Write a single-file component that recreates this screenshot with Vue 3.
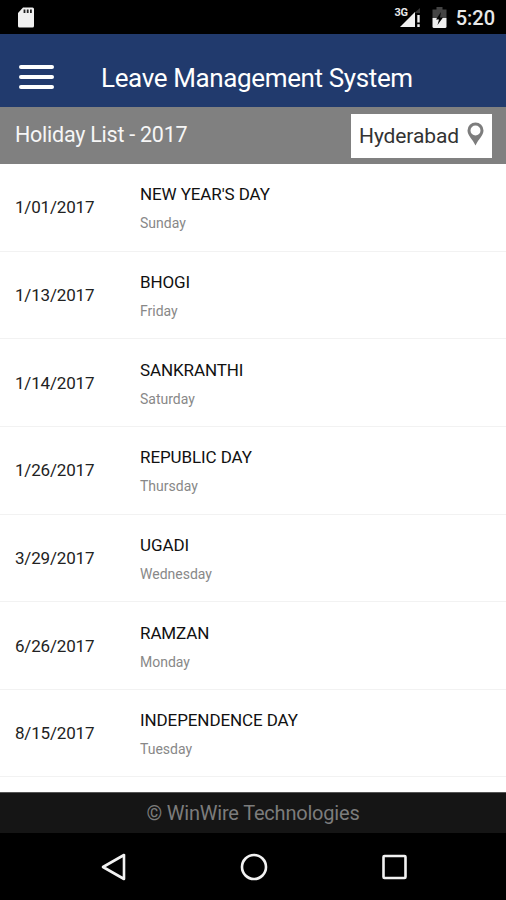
<template>
  <div class="phone">
    <div class="status">
      <svg class="sd" width="17" height="21" viewBox="0 0 17 21">
        <path d="M6 0.5H15.5Q17 0.5 17 2V19Q17 20.5 15.5 20.5H2.5Q1 20.5 1 19V6Z" fill="#f0f0f0" />
        <path d="M7.5 2.5V6M10.700 2.5V6M13.900 2.5V6" stroke="#222" stroke-width="1.800" />
      </svg>
      <div class="status-right">
        <span class="network">3G</span>
        <svg class="signal" width="22" height="20" viewBox="0 0 22 20">
          <path d="M21 1V6H16V9L12 9Z" fill="#333" />
          <path d="M16 5V20H1Z" fill="#f0f0f0" />
          <path d="M19.500 8V15.500M19.500 17.300V20" stroke="#f0f0f0" stroke-width="2.400" />
        </svg>
        <svg class="battery" width="15" height="21" viewBox="0 0 15 21">
          <path d="M4.500 0H10.500V2.500H14.500V11H0.500V2.500H4.500Z" fill="#444" />
          <path d="M0.500 11H14.500V19.500Q14.500 21 13 21H2Q0.500 21 0.500 19.500Z" fill="#f0f0f0" />
          <path d="M9 5L4 12.500H7L5.500 18L11 10.500H8Z" fill="#050505" />
        </svg>
        <span class="clock">5:20</span>
      </div>
    </div>

    <header class="header">
      <button class="menu"><i></i><i></i><i></i></button>
      <h1>Leave Management System</h1>
    </header>

    <div class="subheader">
      <h2>Holiday List - 2017</h2>
      <button class="city">
        <span>{{ city }}</span>
        <svg width="17" height="24" viewBox="0 0 17 24">
          <path d="M8.500 0.500A8 8 0 0 0 0.500 8.500C0.500 13.500 5.500 17 8.500 23.500C11.500 17 16.500 13.500 16.500 8.500A8 8 0 0 0 8.500 0.500ZM8.500 3.500A5 5 0 1 1 8.500 13.500A5 5 0 1 1 8.500 3.500Z" fill="#7d7d7d" fill-rule="evenodd" />
        </svg>
      </button>
    </div>

    <ul class="holidays">
      <li v-for="holiday in holidays" :key="holiday.date">
        <span class="date">{{ holiday.date }}</span>
        <div>
          <p class="name">{{ holiday.name }}</p>
          <p class="day">{{ holiday.day }}</p>
        </div>
      </li>
    </ul>

    <footer class="footer"><span>© WinWire Technologies</span></footer>

    <nav class="softkeys">
      <svg width="28" height="28" viewBox="0 0 28 28"><path d="M25 2V26L4 14Z" /></svg>
      <svg width="28" height="28" viewBox="0 0 28 28"><circle cx="14" cy="14" r="12" /></svg>
      <svg width="28" height="28" viewBox="0 0 28 28"><rect x="3.500" y="3" width="22" height="22" rx="1" /></svg>
    </nav>
  </div>
</template>

<script setup>
import { ref } from "vue"

const city = ref("Hyderabad")

const holidays = ref([
  { date: "1/01/2017", name: "NEW YEAR'S DAY", day: "Sunday" },
  { date: "1/13/2017", name: "BHOGI", day: "Friday" },
  { date: "1/14/2017", name: "SANKRANTHI", day: "Saturday" },
  { date: "1/26/2017", name: "REPUBLIC DAY", day: "Thursday" },
  { date: "3/29/2017", name: "UGADI", day: "Wednesday" },
  { date: "6/26/2017", name: "RAMZAN", day: "Monday" },
  { date: "8/15/2017", name: "INDEPENDENCE DAY", day: "Tuesday" }
])
</script>

<style>
body {
  margin: 0;
}
</style>

<style scoped>
.phone {
  display: flex;
  flex-direction: column;
  width: 506px;
  height: 900px;
  overflow: hidden;
  background: #fff;
  font-family: Roboto, "Liberation Sans", sans-serif;
}

h1, h2, p, ul {
  margin: 0;
  padding: 0;
  font-weight: 400;
}

button {
  border: none;
  padding: 0;
  font-family: inherit;
}

.status {
  display: flex;
  flex: none;
  justify-content: space-between;
  box-sizing: border-box;
  height: 34px;
  padding: 7px 11px 0 17px;
  background: #000;
  color: #e8e8e8;
}

.status-right {
  display: flex;
}

.network {
  font-size: 11px;
  font-weight: 700;
  line-height: 11px;
  letter-spacing: -0.3px;
  margin-right: -9px;
}

.signal {
  margin-right: 11px;
}

.battery {
  margin-right: 9px;
}

.clock {
  font-size: 20px;
  font-weight: 500;
  line-height: 22px;
}

.header {
  display: flex;
  flex: none;
  align-items: center;
  box-sizing: border-box;
  height: 73px;
  padding: 14px 0 0 19px;
  background: #213a6d;
  color: #fff;
}

.menu {
  display: flex;
  flex-direction: column;
  gap: 6px;
  width: 35px;
  margin: -1px 47px 0 0;
  background: none;
}

.menu i {
  height: 4px;
  border-radius: 2px;
  background: #fff;
}

h1 {
  font-size: 26px;
  line-height: 30px;
  letter-spacing: -0.37px;
}

.subheader {
  display: flex;
  flex: none;
  align-items: center;
  justify-content: space-between;
  height: 57px;
  padding: 0 14px 0 15px;
  background: #808080;
}

h2 {
  margin-top: -2px;
  font-size: 21.5px;
  line-height: 26px;
  letter-spacing: -0.25px;
  color: #f6f6f6;
}

.city {
  display: flex;
  align-items: center;
  justify-content: space-between;
  box-sizing: border-box;
  width: 141px;
  height: 44px;
  padding: 0 8px;
  background: #fff;
  font-size: 21px;
  letter-spacing: -0.1px;
  color: #333;
}

.city svg {
  margin-top: -3px;
}

.holidays {
  flex: 1;
  list-style: none;
  overflow: hidden;
}

.holidays li {
  display: flex;
  align-items: center;
  box-sizing: border-box;
  height: 87.65px;
  padding-left: 15px;
  border-bottom: 1px solid #f2f2f2;
}

.date {
  width: 125px;
  font-size: 17px;
  letter-spacing: -0.18px;
  color: #222;
}

.name {
  margin-top: 1px;
  font-size: 17px;
  line-height: 22px;
  letter-spacing: -0.1px;
  color: #111;
}

.day {
  margin-top: 9px;
  font-size: 14px;
  line-height: 18px;
  color: #888;
}

.footer {
  display: flex;
  flex: none;
  align-items: center;
  justify-content: center;
  box-sizing: border-box;
  height: 41px;
  border-top: 1px solid #555;
  background: #151515;
  font-size: 20px;
  letter-spacing: -0.2px;
  color: #7c7c7c;
}

.softkeys {
  display: flex;
  flex: none;
  align-items: center;
  justify-content: space-between;
  box-sizing: border-box;
  height: 67px;
  padding: 0 98px 0 99px;
  background: #000;
}

.softkeys svg {
  fill: none;
  stroke: #f2f2f2;
  stroke-width: 2.6;
  stroke-linejoin: round;
}
</style>
